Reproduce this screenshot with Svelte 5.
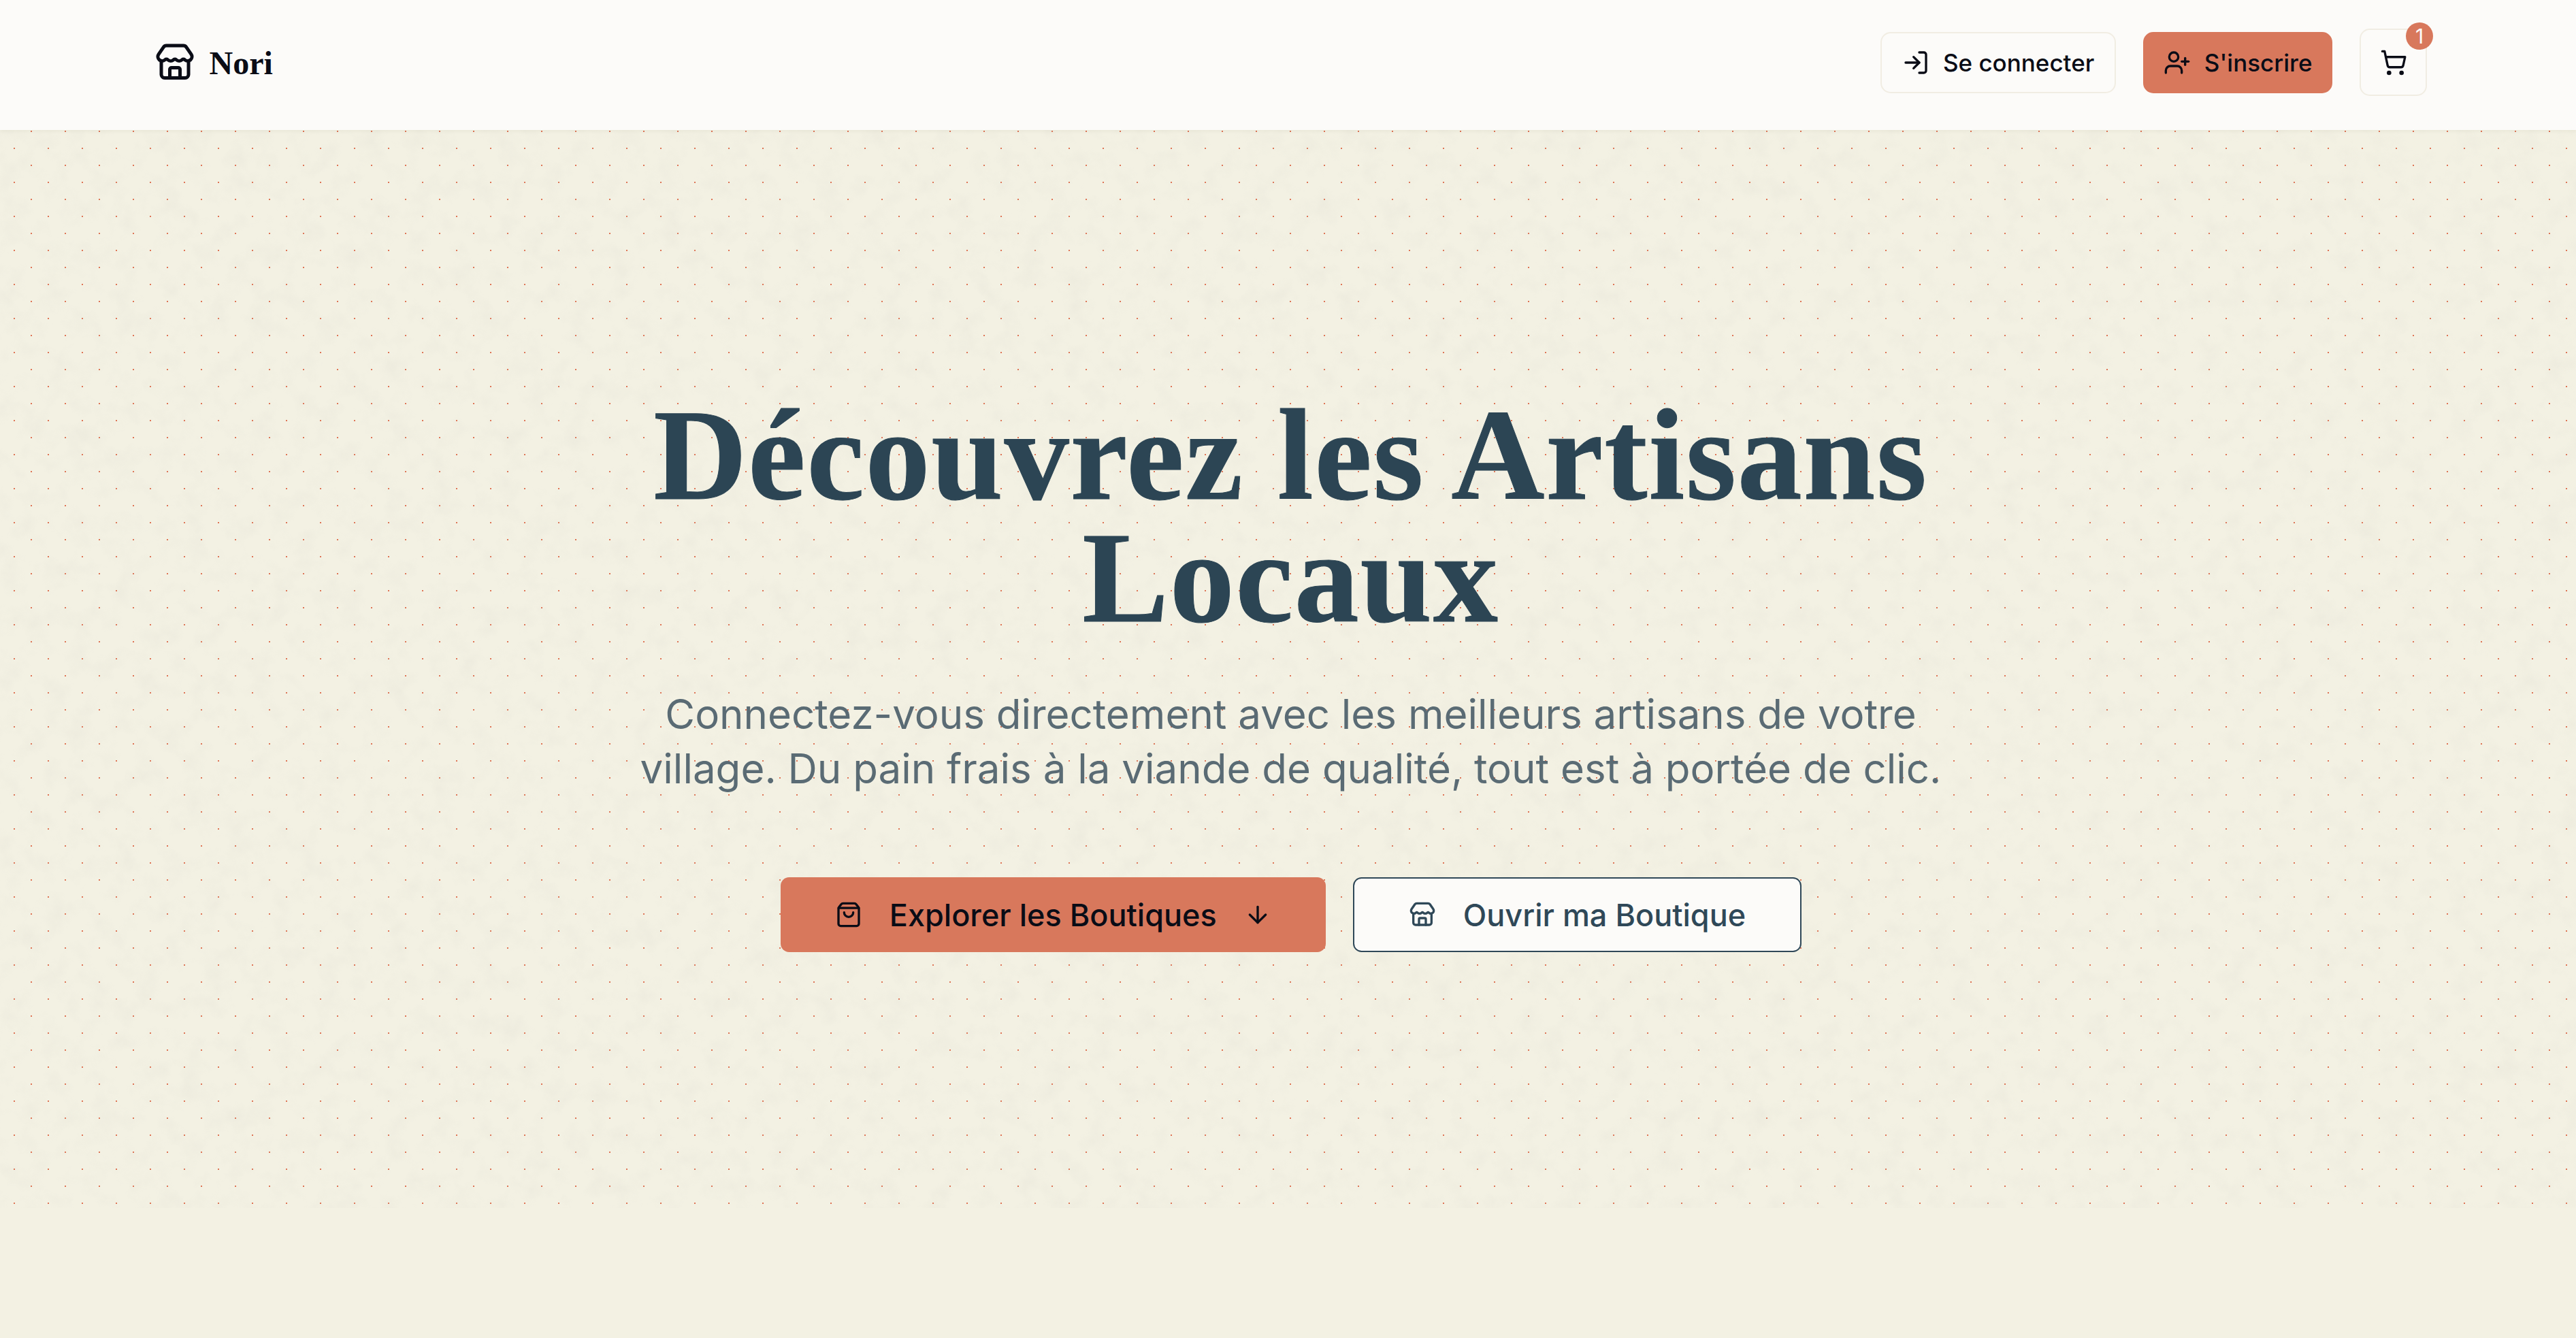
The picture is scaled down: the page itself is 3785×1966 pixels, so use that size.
<script>
  const storePaths = [
    "M15 21v-5a1 1 0 0 0-1-1h-4a1 1 0 0 0-1 1v5",
    "M17.774 10.31a1.12 1.12 0 0 0-1.549 0 2.5 2.5 0 0 1-3.451 0 1.12 1.12 0 0 0-1.548 0 2.5 2.5 0 0 1-3.452 0 1.12 1.12 0 0 0-1.549 0 2.5 2.5 0 0 1-3.77-3.248l2.889-4.184A2 2 0 0 1 7 2h10a2 2 0 0 1 1.653.873l2.895 4.192a2.5 2.5 0 0 1-3.774 3.244",
    "M4 10.95V19a2 2 0 0 0 2 2h12a2 2 0 0 0 2-2v-8.05"
  ];
</script>

<div class="page">
  <header class="topbar">
    <a class="brand" href="#top">
      <svg class="logo-icon" viewBox="0 0 24 24">
        {#each storePaths as d}<path {d} />{/each}
      </svg>
      <span class="brand-name">Nori</span>
    </a>
    <nav class="actions">
      <button class="nav-btn ghost">
        <svg class="icon" viewBox="0 0 24 24">
          <path d="m10 17 5-5-5-5" /><path d="M15 12H3" /><path d="M15 3h4a2 2 0 0 1 2 2v14a2 2 0 0 1-2 2h-4" />
        </svg>
        Se connecter
      </button>
      <button class="nav-btn accent">
        <svg class="icon" viewBox="0 0 24 24">
          <path d="M16 21v-2a4 4 0 0 0-4-4H6a4 4 0 0 0-4 4v2" /><circle cx="9" cy="7" r="4" /><line x1="19" x2="19" y1="8" y2="14" /><line x1="22" x2="16" y1="11" y2="11" />
        </svg>
        S'inscrire
      </button>
      <button class="cart" aria-label="Panier">
        <svg class="icon" viewBox="0 0 24 24">
          <circle cx="8" cy="21" r="1" /><circle cx="19" cy="21" r="1" /><path d="M2.05 2.05h2l2.66 12.42a2 2 0 0 0 2 1.58h9.78a2 2 0 0 0 1.95-1.57l1.65-7.43H5.12" />
        </svg>
        <span class="badge">1</span>
      </button>
    </nav>
  </header>

  <section class="hero">
    <svg class="grain" aria-hidden="true">
      <filter id="mottle" x="0" y="0" width="100%" height="100%">
        <feTurbulence type="fractalNoise" baseFrequency="0.03" numOctaves="4" seed="7" />
        <feColorMatrix values="0 0 0 0 0.55  0 0 0 0 0.54  0 0 0 0 0.50  1 0 0 0 -0.44" />
      </filter>
      <rect width="100%" height="100%" filter="url(#mottle)" opacity="0.22" />
    </svg>
    <div class="hero-content">
      <h1>Découvrez les Artisans Locaux</h1>
      <p>Connectez-vous directement avec les meilleurs artisans de votre village. Du pain frais à la viande de qualité, tout est à portée de clic.</p>
      <div class="cta-row">
        <button class="cta accent">
          <svg class="icon" viewBox="0 0 24 24">
            <path d="M16 10a4 4 0 0 1-8 0" /><path d="M3.103 6.034h17.794" /><path d="M3.4 5.467a2 2 0 0 0-.4 1.2V20a2 2 0 0 0 2 2h14a2 2 0 0 0 2-2V6.667a2 2 0 0 0-.4-1.2l-2-2.667A2 2 0 0 0 17 2H7a2 2 0 0 0-1.6.8z" />
          </svg>
          Explorer les Boutiques
          <svg class="icon" viewBox="0 0 24 24">
            <path d="M12 5v14" /><path d="m19 12-7 7-7-7" />
          </svg>
        </button>
        <button class="cta outline">
          <svg class="icon" viewBox="0 0 24 24">
            {#each storePaths as d}<path {d} />{/each}
          </svg>
          Ouvrir ma Boutique
        </button>
      </div>
    </div>
  </section>
  <div class="below"></div>
</div>

<style>
  :global(body) {
    margin: 0;
    background: #f3f1e3;
    font-family: "Inter", "Liberation Sans", sans-serif;
    color: #0a0c16;
  }
  svg:not(.grain) {
    fill: none;
    stroke: currentColor;
    stroke-width: 2;
    stroke-linecap: round;
    stroke-linejoin: round;
    flex: none;
  }
  .page {
    min-height: 1966px;
    display: flex;
    flex-direction: column;
  }
  .topbar {
    position: relative;
    z-index: 2;
    box-sizing: border-box;
    height: 191px;
    padding: 0 219px 8px 226.5px;
    display: flex;
    align-items: center;
    justify-content: space-between;
    background: #fcfbf9;
    box-shadow: 0 2px 5px rgba(60, 50, 20, 0.05);
  }
  .brand {
    display: flex;
    align-items: center;
    gap: 21px;
    color: #0a0c16;
    text-decoration: none;
  }
  .logo-icon {
    width: 60px;
    height: 60px;
  }
  .brand-name {
    font-family: "Liberation Serif", serif;
    font-weight: 700;
    font-size: 48px;
    line-height: 60px;
    margin-top: 3px;
  }
  .actions {
    display: flex;
    align-items: center;
    gap: 40px;
  }
  .icon {
    width: 40px;
    height: 40px;
  }
  button {
    font-family: inherit;
    color: inherit;
    cursor: pointer;
  }
  .nav-btn {
    box-sizing: border-box;
    height: 90px;
    padding: 0 27.5px;
    display: flex;
    align-items: center;
    gap: 20px;
    font-size: 35px;
    font-weight: 500;
    border-radius: 15px;
    border: 2.5px solid transparent;
  }
  .ghost {
    padding: 0 30px;
    background: #fcfbf9;
    border-color: #f1ede3;
  }
  .accent {
    background: #d8785c;
    border-color: #d8785c;
  }
  .cart {
    position: relative;
    box-sizing: border-box;
    width: 99px;
    height: 99px;
    padding: 0;
    display: flex;
    align-items: center;
    justify-content: center;
    background: #fcfbf9;
    border: 2.5px solid #f1ede3;
    border-radius: 15px;
  }
  .badge {
    position: absolute;
    top: -11.5px;
    right: -11px;
    width: 40px;
    height: 40px;
    border-radius: 50%;
    background: #d8785c;
    color: #fcfbf9;
    font-size: 30px;
    line-height: 40px;
    text-align: center;
  }
  .hero {
    position: relative;
    box-sizing: border-box;
    height: 1584px;
    padding: 388px 0 0 8px;
    background-color: #f3f1e3;
    background-image:
      radial-gradient(circle at 21px 27px, #de7455 1.5px, transparent 1.5px),
      radial-gradient(circle at 46px 2px, #de7455 1.5px, transparent 1.5px);
    background-size: 50px 50px;
  }
  .grain {
    position: absolute;
    inset: 0;
    width: 100%;
    height: 100%;
    pointer-events: none;
  }
  .hero-content {
    position: relative;
    display: flex;
    flex-direction: column;
    align-items: center;
  }
  h1 {
    margin: 0;
    width: 2000px;
    font-family: "Liberation Serif", serif;
    font-weight: 700;
    font-size: 190px;
    line-height: 180px;
    letter-spacing: 1.8px;
    -webkit-text-stroke: 1px #2c4554;
    text-align: center;
    color: #2c4554;
  }
  p {
    margin: 70px 0 0;
    width: 1960px;
    font-size: 60px;
    line-height: 80px;
    text-align: center;
    color: #5a6b74;
  }
  .cta-row {
    margin-top: 120px;
    padding-left: 1px;
    display: flex;
    gap: 40px;
  }
  .cta {
    box-sizing: border-box;
    height: 110px;
    padding: 0 80px;
    display: flex;
    align-items: center;
    gap: 40px;
    font-size: 45px;
    font-weight: 500;
    border-radius: 12.5px;
    border: 0;
  }
  .outline {
    background: #fcfbf9;
    border: 2.5px solid #2f4858;
    color: #2f4858;
  }
</style>
